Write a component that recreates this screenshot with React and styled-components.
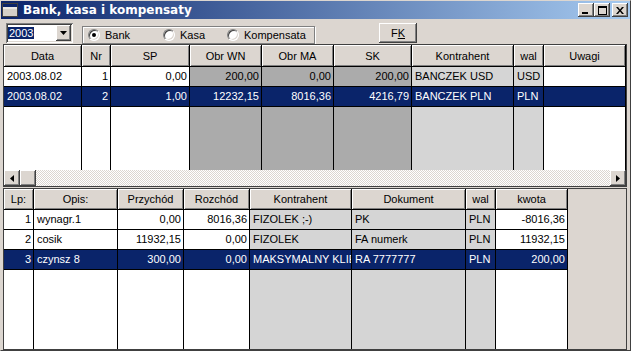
import React from 'react';
import styled, { createGlobalStyle, css } from 'styled-components';

const face = '#DCD6D0';
const navy = '#0A246A';
const darkCol = '#ABABAB';
const lightCol = '#D5D5D5';

const GlobalStyle = createGlobalStyle`
  html, body { margin: 0; padding: 0; background: ${face}; }
  body {
    font-family: 'Liberation Sans', Arial, sans-serif;
    font-size: 11px;
    color: #000;
  }
`;

const raised = css`
  background: ${face};
  box-shadow: inset -1px -1px #404040, inset 1px 1px #fff, inset -2px -2px #808080, inset 2px 2px ${face};
`;

const sunken = css`
  box-shadow: inset 1px 1px #808080, inset -1px -1px #fff, inset 2px 2px #404040, inset -2px -2px ${face};
`;

// Window chrome
const Window = styled.div`
  width: 631px;
  height: 351px;
  box-sizing: border-box;
  background: ${face};
  border-top: 1px solid ${face};
  border-left: 1px solid ${face};
  border-right: 1px solid #404040;
  border-bottom: 1px solid #404040;
  display: flex;
  flex-direction: column;
  overflow: hidden;
`;

const TitleBar = styled.div`
  height: 18px;
  display: flex;
  align-items: center;
  background: linear-gradient(to right, ${navy}, #A6CAF0);
  padding: 0 2px 0 1px;
`;

const TitleText = styled.span`
  flex: 1;
  margin-left: 5px;
  color: #fff;
  font-family: 'DejaVu Sans', Verdana, sans-serif;
  font-weight: bold;
  font-size: 12px;
  white-space: nowrap;
`;

const CaptionButtons = styled.div`
  display: flex;
`;

const CaptionButton = styled.div`
  ${raised};
  width: 16px;
  height: 14px;
  display: flex;
  align-items: center;
  justify-content: center;
  margin-left: ${({ $gap }) => ($gap ? '2px' : '0')};
`;

// Toolbar
const Toolbar = styled.div`
  height: 22px;
  margin-top: 3px;
  padding-left: 5px;
  display: flex;
  align-items: flex-start;
`;

const Combo = styled.div`
  ${sunken};
  background: #fff;
  width: 67px;
  height: 20px;
  margin-top: 1px;
  box-sizing: border-box;
  padding: 2px;
  display: flex;
  align-items: center;
`;

const ComboText = styled.span`
  background: ${navy};
  color: #fff;
  padding: 0 1px;
  line-height: 12px;
  flex: 0 0 auto;
`;

const DropButton = styled.div`
  ${raised};
  margin-left: auto;
  width: 15px;
  height: 16px;
  display: flex;
  align-items: center;
  justify-content: center;
`;

const GroupBox = styled.div`
  margin-left: 9px;
  margin-top: 4px;
  width: 233px;
  height: 18px;
  box-sizing: border-box;
  border: 1px solid #808080;
  box-shadow: inset 1px 1px #fff, 1px 1px #fff;
  display: flex;
  align-items: center;
  padding-left: 5px;
`;

const Radio = styled.label`
  display: flex;
  align-items: center;
  width: ${({ $w }) => ($w ? `${$w}px` : 'auto')};
  white-space: nowrap;
`;

const RadioDot = styled.span`
  width: 12px;
  height: 12px;
  flex: 0 0 12px;
  box-sizing: border-box;
  border-radius: 50%;
  background: #fff;
  border: 1px solid;
  border-color: #808080 #fff #fff #808080;
  box-shadow: inset 1px 1px #404040, inset -1px -1px ${face};
  display: flex;
  align-items: center;
  justify-content: center;
  margin-right: 5px;
  &::after {
    content: '';
    width: 4px;
    height: 4px;
    border-radius: 50%;
    background: ${({ $on }) => ($on ? '#000' : 'transparent')};
  }
`;

const PushButton = styled.div`
  ${raised};
  margin-left: 64px;
  margin-top: 1px;
  width: 38px;
  height: 20px;
  display: flex;
  align-items: center;
  justify-content: center;
`;

// Grids
const GridFrame = styled.div`
  margin: ${({ $mt }) => $mt}px 0 0 2px;
  width: 624px;
  height: ${({ $h }) => $h}px;
  box-sizing: border-box;
  border: 1px solid #404040;
  display: flex;
  flex-direction: column;
  background: ${face};
`;

const Table = styled.div`
  flex: 1;
  display: grid;
  grid-template-columns: ${({ $cols }) => $cols};
  grid-template-rows: ${({ $rows }) => $rows};
  min-height: 0;
`;

const HeadCell = styled.div`
  background: ${face};
  box-shadow: inset 1px 1px #fff, inset -1px -1px #808080;
  border-right: 1px solid #000;
  border-bottom: 1px solid #000;
  display: flex;
  align-items: center;
  justify-content: center;
  white-space: nowrap;
  overflow: hidden;
`;

const Cell = styled.div`
  background: ${({ $sel, $bg }) => ($sel ? navy : $bg)};
  color: ${({ $sel }) => ($sel ? '#fff' : '#000')};
  text-align: ${({ $align }) => $align};
  border-right: 1px solid #000;
  border-bottom: ${({ $fill }) => ($fill ? 'none' : '1px solid #000')};
  padding: 0 2px 0 3px;
  line-height: 19px;
  white-space: nowrap;
  overflow: hidden;
`;

const ScrollBar = styled.div`
  height: 16px;
  display: flex;
  flex: 0 0 16px;
`;

const ScrollBtn = styled.div`
  ${raised};
  width: 16px;
  height: 16px;
  flex: 0 0 16px;
  display: flex;
  align-items: center;
  justify-content: center;
`;

const Track = styled.div`
  flex: 1;
  background: repeating-conic-gradient(#fff 0 25%, ${face} 0 50%) 0 0 / 2px 2px;
`;

const cols1 = [
  { title: 'Data', w: 78, bg: '#fff', align: 'left' },
  { title: 'Nr', w: 29, bg: '#fff', align: 'right' },
  { title: 'SP', w: 79, bg: '#fff', align: 'right' },
  { title: 'Obr WN', w: 72, bg: darkCol, align: 'right' },
  { title: 'Obr MA', w: 72, bg: darkCol, align: 'right' },
  { title: 'SK', w: 78, bg: darkCol, align: 'right' },
  { title: 'Kontrahent', w: 102, bg: lightCol, align: 'left' },
  { title: 'wal', w: 30, bg: lightCol, align: 'left' },
  { title: 'Uwagi', w: 82, bg: '#fff', align: 'left' },
];

const rows1 = [
  { sel: false, v: ['2003.08.02', '1', '0,00', '200,00', '0,00', '200,00', 'BANCZEK USD', 'USD', ''] },
  { sel: true, v: ['2003.08.02', '2', '1,00', '12232,15', '8016,36', '4216,79', 'BANCZEK PLN', 'PLN', ''] },
];

const cols2 = [
  { title: 'Lp:', w: 30, bg: '#fff', align: 'right' },
  { title: 'Opis:', w: 84, bg: '#fff', align: 'left' },
  { title: 'Przychód', w: 66, bg: '#fff', align: 'right' },
  { title: 'Rozchód', w: 66, bg: '#fff', align: 'right' },
  { title: 'Kontrahent', w: 102, bg: lightCol, align: 'left' },
  { title: 'Dokument', w: 114, bg: lightCol, align: 'left' },
  { title: 'wal', w: 30, bg: lightCol, align: 'left' },
  { title: 'kwota', w: 72, bg: '#fff', align: 'right' },
];

const rows2 = [
  { sel: false, v: ['1', 'wynagr.1', '0,00', '8016,36', 'FIZOLEK ;-)', 'PK', 'PLN', '-8016,36'] },
  { sel: false, v: ['2', 'cosik', '11932,15', '0,00', 'FIZOLEK', 'FA numerk', 'PLN', '11932,15'] },
  { sel: true, v: ['3', 'czynsz 8', '300,00', '0,00', 'MAKSYMALNY KLIENT', 'RA 7777777', 'PLN', '200,00'] },
];

const Grid = ({ cols, rows, headH, extraCol }) => {
  const template = cols.map((c) => `${c.w}px`).join(' ') + (extraCol ? ' 1fr' : '');
  const rowTemplate = `${headH}px ${rows.map(() => '20px').join(' ')} 1fr`;
  return (
    <Table $cols={template} $rows={rowTemplate}>
      {cols.map((c) => (
        <HeadCell key={c.title}>{c.title}</HeadCell>
      ))}
      {extraCol && <div />}
      {rows.map((r, i) => (
        <React.Fragment key={i}>
          {r.v.map((val, j) => (
            <Cell key={j} $sel={r.sel} $bg={cols[j].bg} $align={cols[j].align}>
              {val}
            </Cell>
          ))}
          {extraCol && <div />}
        </React.Fragment>
      ))}
      {cols.map((c) => (
        <Cell key={c.title} $fill $bg={c.bg} />
      ))}
      {extraCol && <div />}
    </Table>
  );
};

const AppIcon = () => (
  <svg width="16" height="14" viewBox="0 0 16 14">
    <rect x="0.5" y="0.5" width="15" height="13" fill="#D4D0C8" stroke="#404040" />
    <rect x="1" y="1" width="14" height="3" fill="#0A246A" />
    <line x1="1" y1="5" x2="15" y2="5" fill="none" stroke="#fff" />
  </svg>
);

const Arrow = ({ dir }) => {
  const pts = {
    down: '0,0 7,0 3.5,4',
    left: '4,0 4,7 0,3.5',
    right: '0,0 0,7 4,3.5',
  }[dir];
  const size = dir === 'down' ? [7, 4] : [4, 7];
  return (
    <svg width={size[0]} height={size[1]} viewBox={`0 0 ${size[0]} ${size[1]}`}>
      <polygon points={pts} fill="#000" />
    </svg>
  );
};

export default function App() {
  return (
    <>
      <GlobalStyle />
      <Window>
        <TitleBar>
          <AppIcon />
          <TitleText>Bank, kasa i kompensaty</TitleText>
          <CaptionButtons>
            <CaptionButton>
              <svg width="8" height="7" viewBox="0 0 8 7">
                <rect x="0" y="5" width="6" height="2" fill="#000" />
              </svg>
            </CaptionButton>
            <CaptionButton>
              <svg width="9" height="9" viewBox="0 0 9 9">
                <rect x="0.5" y="0.5" width="8" height="8" fill="none" stroke="#000" />
                <rect x="0" y="1" width="9" height="1" fill="#000" />
              </svg>
            </CaptionButton>
            <CaptionButton $gap>
              <svg width="8" height="7" viewBox="0 0 8 7">
                <path d="M0 0h2l2 2.5L6 0h2L5 3.5 8 7H6L4 4.5 2 7H0l3-3.5z" fill="#000" />
              </svg>
            </CaptionButton>
          </CaptionButtons>
        </TitleBar>

        <Toolbar>
          <Combo>
            <ComboText>2003</ComboText>
            <DropButton>
              <Arrow dir="down" />
            </DropButton>
          </Combo>
          <GroupBox>
            <Radio $w={75}>
              <RadioDot $on />
              Bank
            </Radio>
            <Radio $w={64}>
              <RadioDot />
              Kasa
            </Radio>
            <Radio>
              <RadioDot />
              Kompensata
            </Radio>
          </GroupBox>
          <PushButton>
            <span>
              F<u>K</u>
            </span>
          </PushButton>
        </Toolbar>

        <GridFrame $mt={0} $h={143}>
          <Grid cols={cols1} rows={rows1} headH={22} />
          <ScrollBar>
            <ScrollBtn>
              <Arrow dir="left" />
            </ScrollBtn>
            <ScrollBtn />
            <Track />
            <ScrollBtn>
              <Arrow dir="right" />
            </ScrollBtn>
          </ScrollBar>
        </GridFrame>

        <GridFrame $mt={1} $h={162}>
          <Grid cols={cols2} rows={rows2} headH={21} extraCol />
        </GridFrame>
      </Window>
    </>
  );
}
